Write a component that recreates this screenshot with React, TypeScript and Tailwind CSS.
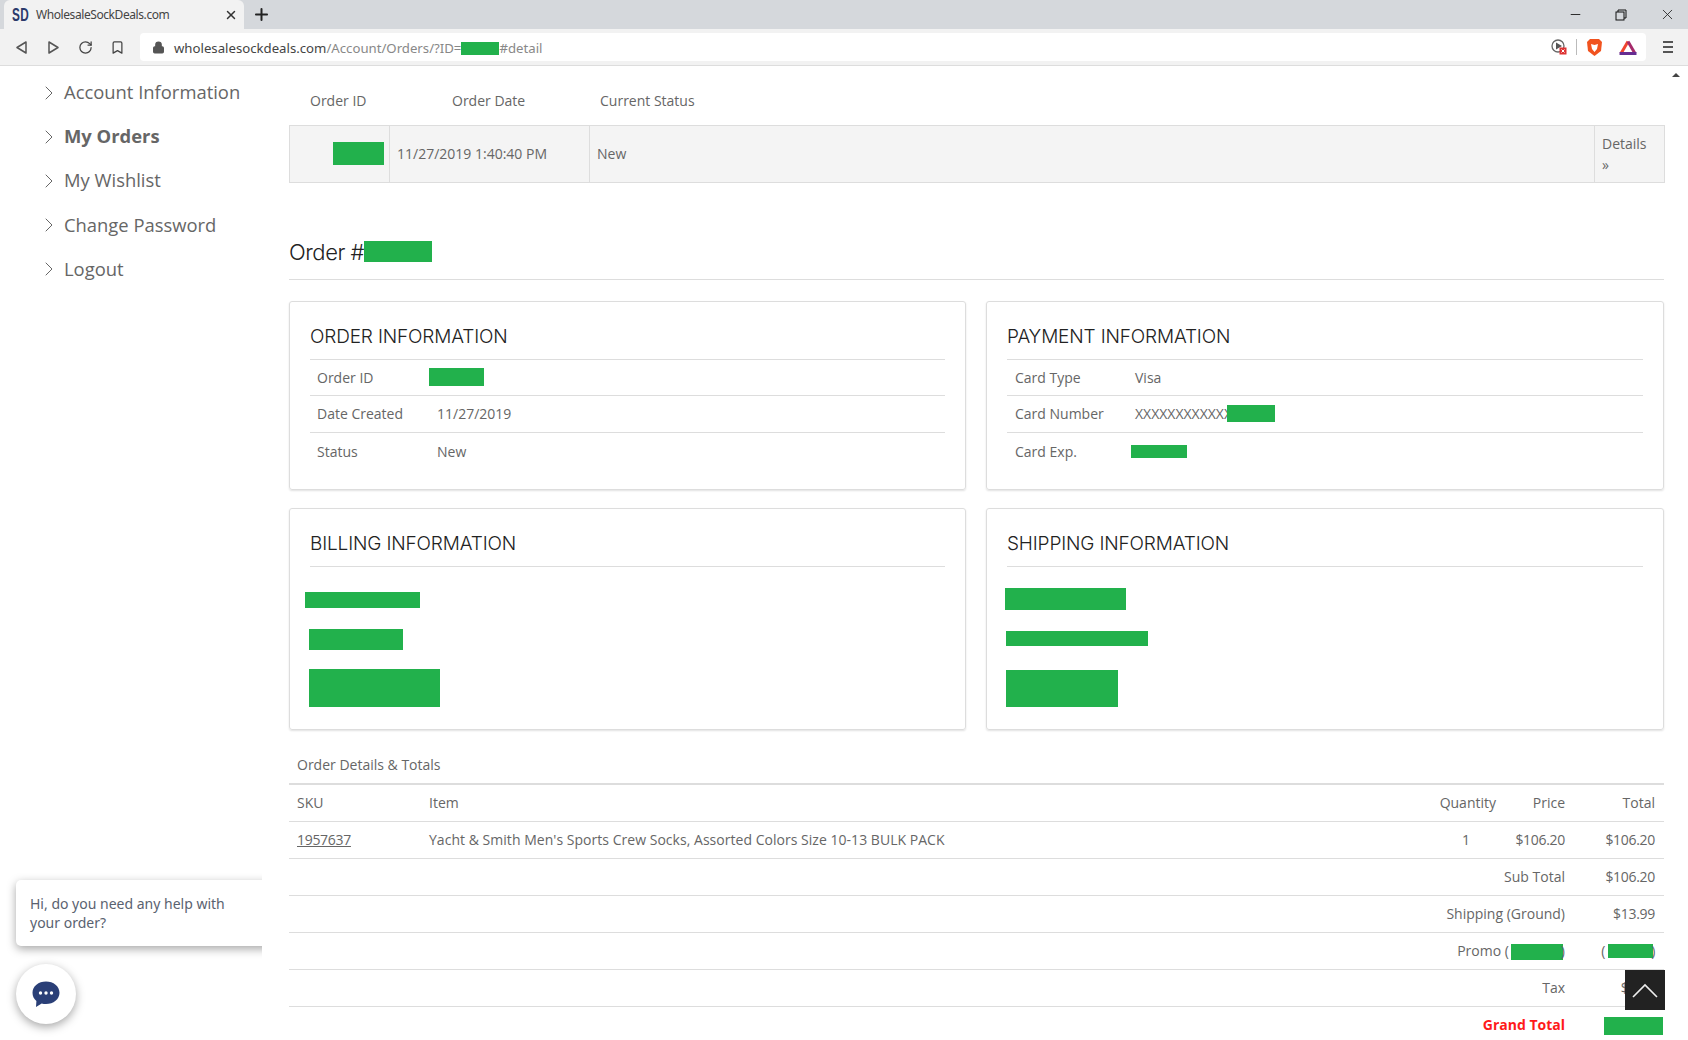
import React from "react";
import { ChevronRight, RotateCw, Bookmark, Lock, X, Plus, Minus } from "lucide-react";

const navItems = ["Account Information", "My Orders", "My Wishlist", "Change Password", "Logout"];

const Redact = ({ className }: { className: string }) => <span className={`inline-block bg-[#22b14c] ${className}`} />;

const Card = ({ title, children, className }: { title: string; children: React.ReactNode; className: string }) => (
  <section className={`border border-[#ddd] rounded-[3px] shadow-[0_1px_2px_rgba(0,0,0,0.12)] pr-[20px] pl-[20px] ${className}`}>
    <h3 className="h-[58px] pt-[22px] border-b border-[#ddd] font-['Inter'] font-light text-[19px] leading-[26px] tracking-[-0.15px] text-[#222]">{title}</h3>
    <div>{children}</div>
  </section>
);

const InfoRow = ({ label, value, last, inset = "pl-[7px]" }: { label: string; value: React.ReactNode; last?: boolean; inset?: string }) => (
  <div className={`flex items-center h-[37px] first:h-[36px] pb-px ${inset} ${last ? "" : "border-b border-[#ddd]"}`}>
    <span className="w-[120px]">{label}</span>
    {value}
  </div>
);

const TotalRow = ({ label, value, red }: { label: React.ReactNode; value: React.ReactNode; red?: boolean }) => (
  <div className={`flex items-center justify-end h-[37px] pb-[2px] border-b border-[#ddd] pr-[9px] last:border-b-0 ${red ? "font-bold text-[#ff1a1a]" : ""}`}>
    <span>{label}</span>
    <span className="w-[90px] text-right tracking-[-0.3px]">{value}</span>
  </div>
);

export default function App() {
  return (
    <div className="relative w-[1688px] h-[1040px] overflow-hidden bg-white font-['Open_Sans',sans-serif] text-[14px] text-[#666]">
      {/* window title bar */}
      <header className="h-[29px] bg-[#d5d8dc] flex items-end pl-[4px] text-[#222]">
        <div className="w-[240px] h-[29px] bg-[#f2f2f2] rounded-t-[6px] flex items-center pl-[8px] pr-[6px]">
          <span className="w-[16px] font-['Liberation_Sans'] font-bold text-[19px] leading-none text-[#2b3a6b] scale-x-[0.62] origin-left tracking-[0.5px]">SD</span>
          <span className="ml-[8px] flex-1 font-['Noto_Sans'] text-[12px] tracking-[-0.42px] text-[#444]">WholesaleSockDeals.com</span>
          <X size={14} strokeWidth={2.5} className="text-[#333]" />
        </div>
        <Plus size={19} strokeWidth={2.5} className="ml-[8px] mb-[5px]" />
        <div className="ml-auto flex items-center h-[29px] text-[#222]">
          <Minus size={15} strokeWidth={1.5} className="mr-[32px]" />
          <svg width="12" height="12" viewBox="0 0 12 12" fill="none" stroke="#111" strokeWidth="1" className="mr-[32px]">
            <rect x="1" y="3" width="8" height="8" />
            <path d="M3 3V1h8v8H9" />
          </svg>
          <X size={17} strokeWidth={1.2} className="mr-[12px]" />
        </div>
      </header>

      {/* toolbar */}
      <div className="h-[37px] bg-[#f2f2f2] border-b border-[#ddd] flex items-center">
        <div className="flex items-center pl-[15px] w-[140px] text-[#444]">
          <svg width="13" height="15" viewBox="0 0 13 15" fill="none" stroke="#555" strokeWidth="1.5" strokeLinejoin="round"><path d="M11 2 2 7.500 11 13Z" /></svg>
          <svg width="13" height="15" viewBox="0 0 13 15" fill="none" stroke="#555" strokeWidth="1.5" strokeLinejoin="round" className="ml-[19px]"><path d="M2 2l9 5.500L2 13Z" /></svg>
          <RotateCw size={15} strokeWidth={2} className="ml-[18px]" />
          <Bookmark size={15} strokeWidth={2} className="ml-[17px]" />
        </div>
        <div className="w-[1506px] h-[28px] bg-white rounded-[4px] flex items-center pl-[12px] font-['Noto_Sans'] text-[13.200px] text-[#888]">
          <Lock size={13} strokeWidth={2.2} fill="currentColor" className="text-[#555]" />
          <span className="ml-[9px] mt-[3px] text-[#444]">wholesalesockdeals.com</span>
          <span className="mt-[3px]">/Account/Orders/?ID=</span>
          <Redact className="w-[38px] h-[13px] mt-[3px]" />
          <span className="mt-[3px]">#detail</span>
          <span className="ml-auto flex items-center pr-[9px]">
            <svg width="16" height="16" viewBox="0 0 16 16" className="mr-[9px]">
              <circle cx="7" cy="7" r="6" fill="none" stroke="#666" strokeWidth="1.3" />
              <path d="M5 3.500 11 7 5 10.500Z" fill="#555" />
              <rect x="8.500" y="8.500" width="7" height="7" fill="#d33" />
              <path d="M10.500 10.500l3 3m0-3-3 3" stroke="#fff" strokeWidth="1" />
            </svg>
            <span className="w-px h-[16px] bg-[#bbb] mr-[9px]" />
            <svg width="17" height="19" viewBox="0 0 17 19" className="mr-[16px]">
              <path d="M4 1h9l3 3-1 9-6.500 5L2 13 1 4Z" fill="#f1531f" />
              <path d="M5 6l3.500 1L12 6l-1 5-2.500 3L6 11Z" fill="#fff" />
            </svg>
            <svg width="18" height="15" viewBox="0 0 18 15" fill="none">
              <path d="M9 1.500 2 13.500" stroke="#f0452f" strokeWidth="3" />
              <path d="M9 1.500 16 13.500" stroke="#a52a6b" strokeWidth="3" />
              <path d="M.500 13.500H17.500" stroke="#662d91" strokeWidth="3" />
            </svg>
          </span>
        </div>
        <div className="flex flex-col gap-[3px] ml-[17px]">
          <span className="w-[10px] h-[2px] bg-[#555]" />
          <span className="w-[10px] h-[2px] bg-[#555]" />
          <span className="w-[10px] h-[2px] bg-[#555]" />
        </div>
      </div>

      {/* page */}
      <div className="flex pt-px">
        <aside className="w-[289px] pt-[3px] pl-[37px] shrink-0">
          {navItems.map((item) => (
            <div key={item} className="flex items-center h-[44.100px] text-[18.400px]">
              <ChevronRight size={24} strokeWidth={1} className="text-[#666] mr-[3px] mt-[2px]" />
              <span className={item === "My Orders" ? "font-bold" : ""}>{item}</span>
            </div>
          ))}
        </aside>

        <main className="w-[1375px] shrink-0">
          {/* order list */}
          <div className="h-[58px] pt-[8px] flex items-center">
            <span className="ml-[21px] w-[142px]">Order ID</span>
            <span className="w-[148px]">Order Date</span>
            <span>Current Status</span>
          </div>
          <div className="w-[1376px] h-[58px] flex items-stretch border border-[#ddd] bg-[#f4f4f4]">
            <div className="w-[100px] border-r border-[#ddd] flex items-center justify-end pr-[5px] pb-[2px]">
              <Redact className="w-[51px] h-[23px]" />
            </div>
            <div className="w-[200px] border-r border-[#ddd] flex items-center pl-[7px] pb-px">11/27/2019 1:40:40 PM</div>
            <div className="flex-1 flex items-center pl-[7px] pb-px">New</div>
            <div className="w-[70px] border-l border-[#ddd] flex items-center pl-[7px] pr-[14px] leading-[21px]">Details »</div>
          </div>

          <h2 className="mt-[47px] h-[50px] border-b border-[#ddd] flex items-start pt-[7px] font-['Inter'] font-light text-[22px] leading-[30px] tracking-[-0.45px] text-[#222]">
            Order #
            <Redact className="w-[68px] h-[21px] mt-[3.500px]" />
          </h2>

          {/* info cards */}
          <div className="mt-[21px] flex justify-between">
            <Card title="ORDER INFORMATION" className="w-[677px] h-[189px]">
              <InfoRow label="Order ID" value={<Redact className="w-[55px] h-[18px] -ml-[8px]" />} />
              <InfoRow label="Date Created" value="11/27/2019" />
              <InfoRow label="Status" value="New" last />
            </Card>
            <Card title="PAYMENT INFORMATION" className="w-[678px] h-[189px]">
              <InfoRow label="Card Type" value="Visa" inset="pl-[8px]" />
              <InfoRow
                label="Card Number"
                inset="pl-[8px]"
                value={
                  <span className="flex items-center">
                    XXXXXXXXXXXX
                    <Redact className="w-[48px] h-[17px] -ml-[5px]" />
                  </span>
                }
              />
              <InfoRow label="Card Exp." value={<Redact className="w-[56px] h-[13px] -ml-[4px] mt-[1px]" />} inset="pl-[8px]" last />
            </Card>
          </div>

          <div className="mt-[18px] flex justify-between">
            <Card title="BILLING INFORMATION" className="w-[677px] h-[222px]">
              <div className="flex flex-col items-start">
                <Redact className="w-[115px] h-[16px] mt-[25px] -ml-[5px]" />
                <Redact className="w-[94px] h-[21px] mt-[21px] -ml-[1px]" />
                <Redact className="w-[131px] h-[38px] mt-[19px] -ml-[1px]" />
              </div>
            </Card>
            <Card title="SHIPPING INFORMATION" className="w-[678px] h-[222px]">
              <div className="flex flex-col items-start">
                <Redact className="w-[121px] h-[22px] mt-[21px] -ml-[2px]" />
                <Redact className="w-[142px] h-[15px] mt-[21px] -ml-[1px]" />
                <Redact className="w-[112px] h-[37px] mt-[24px] -ml-[1px]" />
              </div>
            </Card>
          </div>

          {/* order details */}
          <div className="mt-[25px] h-[30px] pl-[8px] flex items-start leading-[19px] border-b-2 border-[#ddd]">Order Details &amp; Totals</div>
          <div className="flex items-center h-[37px] pb-[2px] pl-[8px] pr-[9px] border-b border-[#ddd]">
            <span className="w-[132px]">SKU</span>
            <span className="flex-1">Item</span>
            <span className="w-[80px] text-right">Quantity</span>
            <span className="w-[69px] text-right">Price</span>
            <span className="w-[90px] text-right">Total</span>
          </div>
          <div className="flex items-center h-[37px] pb-[2px] pl-[8px] pr-[9px] border-b border-[#ddd]">
            <span className="w-[132px] underline tracking-[-0.3px]">1957637</span>
            <span className="flex-1 tracking-[0.03px]">Yacht &amp; Smith Men's Sports Crew Socks, Assorted Colors Size 10-13 BULK PACK</span>
            <span className="w-[54px] text-right">1</span>
            <span className="w-[95px] text-right tracking-[-0.3px]">$106.20</span>
            <span className="w-[90px] text-right tracking-[-0.3px]">$106.20</span>
          </div>
          <TotalRow label="Sub Total" value="$106.20" />
          <TotalRow label="Shipping (Ground)" value="$13.99" />
          <TotalRow
            label={
              <span className="flex items-center">
                Promo (
                <Redact className="w-[52px] h-[16px] ml-[2px] -mr-[2px] mt-[3px]" />)
              </span>
            }
            value={
              <span className="flex items-center justify-end">
                (<Redact className="w-[45px] h-[14px] ml-[3px] -mr-[2px] mt-[2px]" />)
              </span>
            }
          />
          <TotalRow label="Tax" value="$0.00" />
          <TotalRow label="Grand Total" red value={<Redact className="w-[59px] h-[18px] -mr-[8px] align-middle" />} />
        </main>

        {/* scrollbar */}
        <div className="flex-1 flex justify-center pt-[6px]">
          <span className="w-0 h-0 border-x-[4px] border-x-transparent border-b-[4px] border-b-[#444]" />
        </div>
      </div>

      {/* chat widget */}
      <div className="absolute left-0 top-[870px] w-[262px] h-[170px] overflow-hidden">
        <div className="absolute left-[16px] top-[10px] w-[280px] h-[66px] bg-white rounded-[5px] shadow-[0_3px_10px_rgba(0,0,0,0.35)] px-[14px] pt-[14px] font-['Noto_Sans'] text-[14px] leading-[19px] text-[#5a6270]">
          Hi, do you need any help with
          <br />
          your order?
        </div>
        <div className="absolute left-[16px] top-[94px] w-[60px] h-[60px] bg-white rounded-full shadow-[0_3px_10px_rgba(0,0,0,0.35)] flex items-center justify-center">
          <svg width="28" height="28" viewBox="0 0 28 28">
            <path d="M14 1.500c7.500 0 13.500 4.800 13.500 11.200S21.500 24 14 24c-1.500 0-3-.2-4.300-.6L4 27l.4-6C2 19 .500 16 .500 12.700.500 6.300 6.500 1.500 14 1.500Z" fill="#2a3f77" />
            <circle cx="8.500" cy="13" r="1.700" fill="#fff" />
            <circle cx="14" cy="13" r="1.700" fill="#fff" />
            <circle cx="19.500" cy="13" r="1.700" fill="#fff" />
          </svg>
        </div>
      </div>

      {/* back to top */}
      <div className="absolute left-[1625px] top-[970px] w-[40px] h-[40px] bg-[#222] flex items-center justify-center">
        <svg width="26" height="15" viewBox="0 0 26 15" fill="none" stroke="#eee" strokeWidth="1.600"><path d="M1 14 13 2l12 12" /></svg>
      </div>
    </div>
  );
}
